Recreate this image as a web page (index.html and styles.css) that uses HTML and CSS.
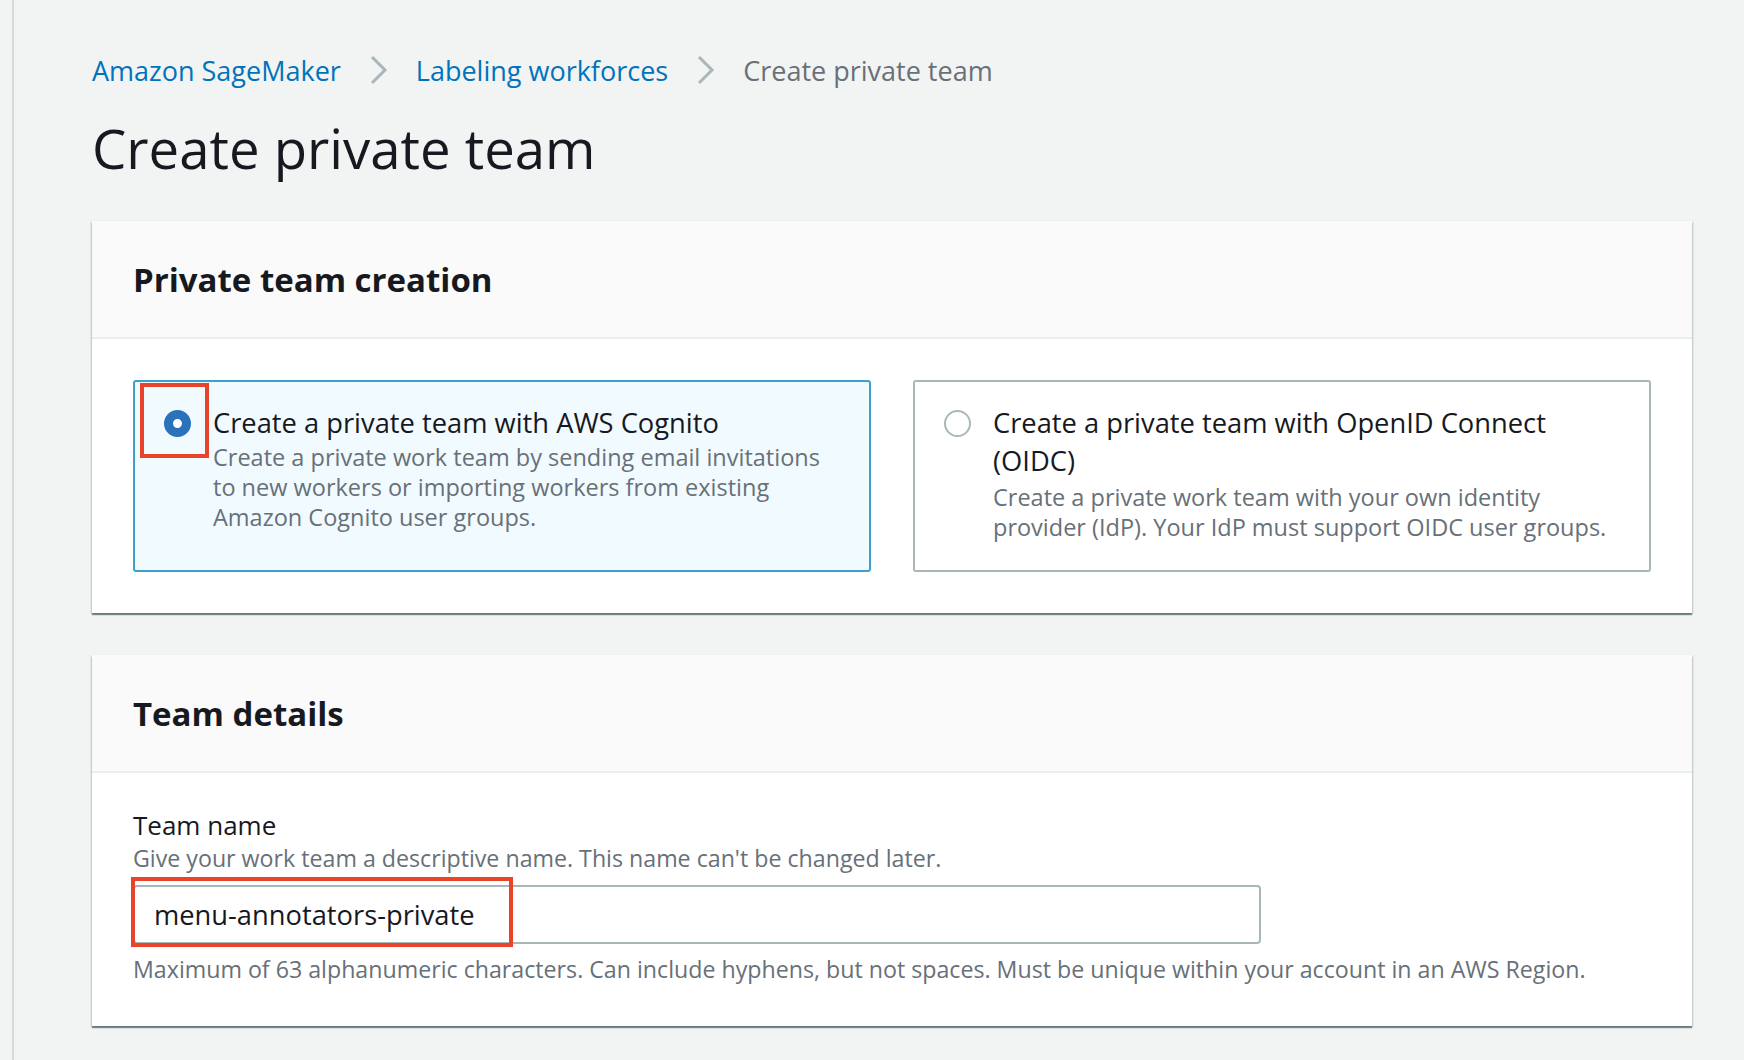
FILE: index.html
```html
<!DOCTYPE html>
<html lang="en">
<head>
<meta charset="utf-8">
<title>Create private team</title>
<link rel="stylesheet" href="styles.css">
</head>
<body>
<div class="page">
  <main class="content">
    <nav class="breadcrumbs">
      <a class="crumb-link" href="#">Amazon SageMaker</a>
      <svg class="chev" width="18" height="30" viewBox="0 0 18 30"><path d="M2 2 L15 15 L2 28" fill="none" stroke="#aab7b8" stroke-width="3"/></svg>
      <a class="crumb-link" href="#">Labeling workforces</a>
      <svg class="chev" width="18" height="30" viewBox="0 0 18 30"><path d="M2 2 L15 15 L2 28" fill="none" stroke="#aab7b8" stroke-width="3"/></svg>
      <span class="crumb-current">Create private team</span>
    </nav>
    <h1 class="page-title">Create private team</h1>

    <section class="panel">
      <header class="panel-header"><h2>Private team creation</h2></header>
      <div class="panel-body options">
        <label class="option selected">
          <span class="radio-wrap">
            <span class="radio on"></span>
            <span class="highlight radio-hl"></span>
          </span>
          <span class="opt-text">
            <span class="opt-title">Create a private team with AWS Cognito</span>
            <span class="opt-desc">Create a private work team by sending email invitations to new workers or importing workers from existing Amazon Cognito user groups.</span>
          </span>
        </label>
        <label class="option">
          <span class="radio-wrap"><span class="radio"></span></span>
          <span class="opt-text">
            <span class="opt-title">Create a private team with OpenID Connect (OIDC)</span>
            <span class="opt-desc">Create a private work team with your own identity provider (IdP). Your IdP must support OIDC user groups.</span>
          </span>
        </label>
      </div>
    </section>

    <section class="panel">
      <header class="panel-header"><h2>Team details</h2></header>
      <div class="panel-body field">
        <div class="field-label">Team name</div>
        <div class="field-desc">Give your work team a descriptive name. This name can't be changed later.</div>
        <div class="input-wrap">
          <div class="input"><span class="input-value">menu-annotators-private</span></div>
          <span class="highlight input-hl"></span>
        </div>
        <div class="field-constraint">Maximum of 63 alphanumeric characters. Can include hyphens, but not spaces. Must be unique within your account in an AWS Region.</div>
      </div>
    </section>
  </main>
</div>
</body>
</html>
```

FILE: styles.css
```css
* { box-sizing: border-box; }
html, body { margin: 0; padding: 0; }
body {
  background: #f2f3f3;
  font-family: "Open Sans", "Noto Sans", "Liberation Sans", sans-serif;
  color: #16191f;
  overflow: hidden;
}
.page {
  margin-left: 12px;
  border-left: 2px solid #d5dbdb;
  min-height: 1060px;
}
.content {
  padding: 50px 52px 0 78px;
}
.breadcrumbs {
  display: flex;
  align-items: center;
  height: 40px;
  font-size: 27px;
}
.crumb-link { color: #0073bb; text-decoration: none; }
.crumb-current { color: #687078; }
.chev { margin: 0 28px 0 29px; }
.page-title {
  margin: 25px 0 0;
  font-size: 54.5px;
  font-weight: 400;
  line-height: 66px;
  color: #16191f;
}
.panel {
  background: #fff;
  margin-top: 40px;
  box-shadow: 0 2px 1px 0 rgba(0,28,36,.45), 1px 1px 2px 0 rgba(0,28,36,.15), -1px 1px 2px 0 rgba(0,28,36,.15);
}
.panel + .panel { margin-top: 42px; }
.panel-header {
  background: #fafafa;
  border-bottom: 2px solid #eaeded;
  height: 118px;
  padding: 0 41px;
  display: flex;
  align-items: center;
}
.panel-header h2 {
  margin: 0;
  font-size: 33px;
  font-weight: 700;
  color: #16191f;
}
.panel-body { padding: 41px; }
.options {
  display: grid;
  grid-template-columns: 1fr 1fr;
  gap: 42px;
}
.option {
  display: flex;
  height: 192px;
  border: 2px solid #aab7b8;
  border-radius: 3px;
  padding: 22px 20px 0 29px;
  background: #fff;
}
.option.selected {
  border-color: #3ea0cb;
  background: #f1faff;
}
.radio-wrap {
  position: relative;
  flex: none;
  width: 27px;
  height: 38px;
  display: flex;
  align-items: center;
  margin-right: 22px;
}
.radio {
  width: 27px;
  height: 27px;
  border-radius: 50%;
  border: 2.5px solid #aab7b8;
  background: #fff;
}
.radio.on {
  border: 9px solid #2a72b9;
  background: #fff;
}
.highlight {
  position: absolute;
  border: 4px solid #e8432b;
  pointer-events: none;
}
.radio-hl {
  left: -24px;
  top: -21px;
  width: 69px;
  height: 75px;
}
.opt-text {
  display: flex;
  flex-direction: column;
  max-width: 622px;
}
.opt-title {
  font-size: 27.3px;
  line-height: 38px;
  color: #16191f;
}
.opt-desc {
  font-size: 23.5px;
  line-height: 30px;
  color: #687078;
}
.option:not(.selected) .opt-title + .opt-desc { margin-top: 2px; }
.field { padding-top: 34px; padding-bottom: 42px; }
.field-label {
  font-size: 26px;
  line-height: 36px;
  color: #16191f;
}
.field-desc {
  font-size: 23.2px;
  line-height: 30px;
  color: #687078;
}
.input-wrap {
  position: relative;
  width: 1128px;
  margin-top: 12px;
}
.input {
  height: 59px;
  border: 2px solid #aab7b8;
  border-radius: 4px;
  background: #fff;
  padding: 0 19px;
  display: flex;
  align-items: center;
}
.input-value {
  font-size: 27.3px;
  color: #16191f;
}
.input-hl {
  left: -2px;
  top: -8px;
  width: 382px;
  height: 70px;
}
.field-constraint {
  margin-top: 10px;
  font-size: 23.2px;
  line-height: 30px;
  color: #687078;
}
```
